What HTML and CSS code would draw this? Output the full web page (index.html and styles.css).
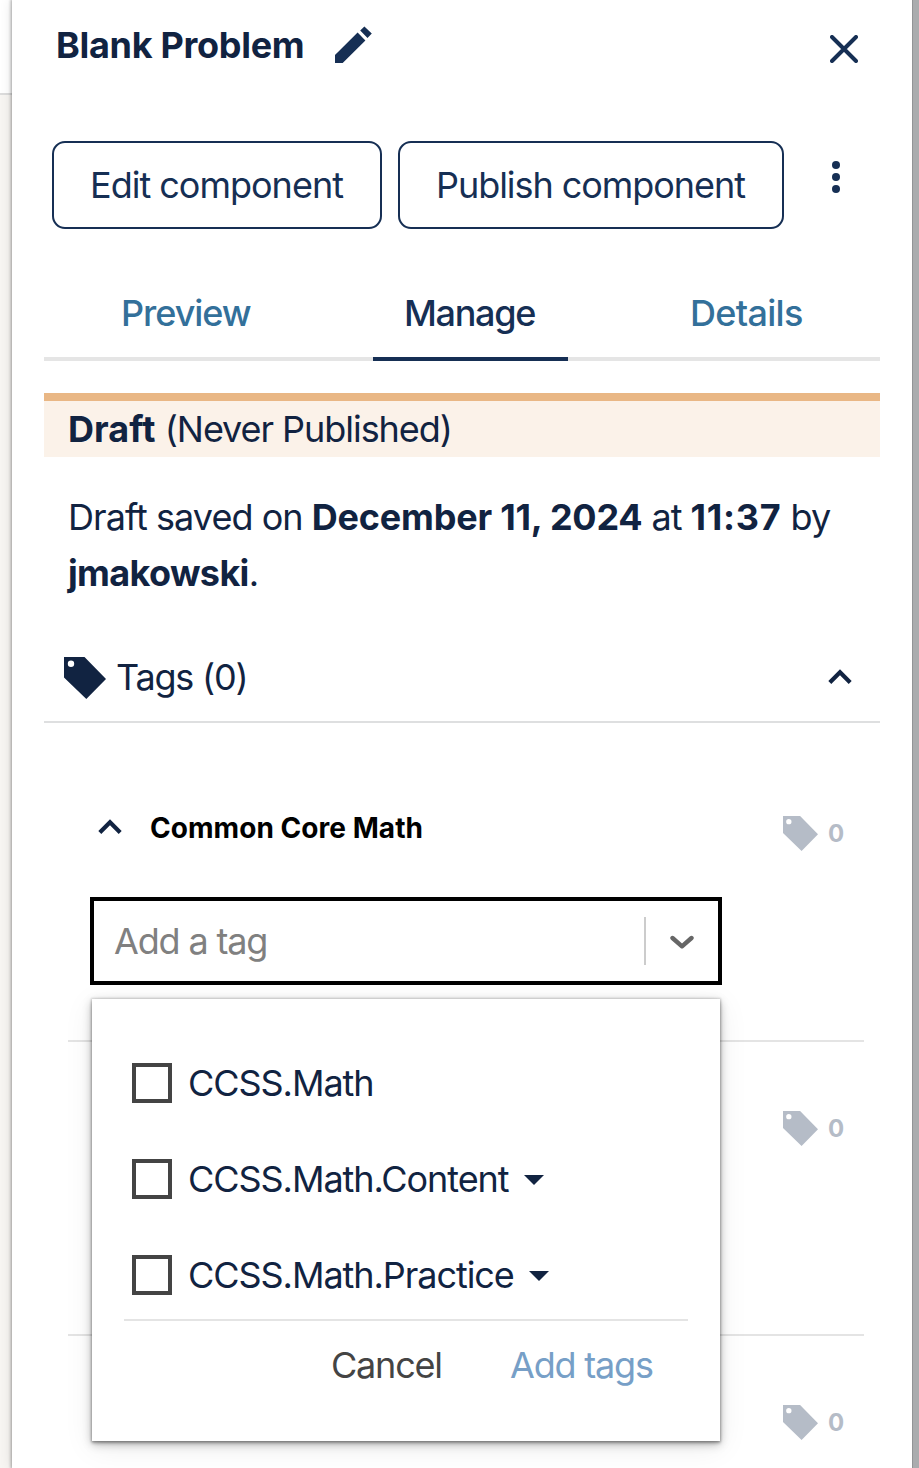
FILE: index.html
```html
<!DOCTYPE html>
<html lang="en">
<head>
<meta charset="utf-8">
<title>Blank Problem</title>
<link rel="stylesheet" href="styles.css">
</head>
<body>
<svg class="defs" width="0" height="0" aria-hidden="true">
  <symbol id="tag" viewBox="0 0 42 42"><path fill-rule="evenodd" d="M0 0H20.500L42 22 22.300 42 0 20.500ZM7 3.600a3.200 3.200 0 1 0 0 6.400a3.200 3.200 0 1 0 0-6.400Z"/></symbol>
  <symbol id="up" viewBox="0 0 24 16"><path d="M1.800 13.400 12 3.200l10.200 10.200" fill="none" stroke="currentColor" stroke-width="4.200"/></symbol>
</svg>
<div class="page">
  <div class="backdrop"><div class="backdrop-bar"></div></div>
  <main class="panel">
    <header class="header">
      <h1 class="title">Blank Problem</h1>
      <svg class="pencil" viewBox="0 0 38 38"><path d="M1 29 23.600 6.600l7.800 7.800L8.700 37H1ZM26.200 4.600 30.400.400l7.400 7.200L33.500 12Z"/></svg>
      <svg class="close" viewBox="0 0 28 28"><path d="M2 2 26 26M26 2 2 26"/></svg>
    </header>
    <div class="actions">
      <button class="button edit">Edit component</button>
      <button class="button publish">Publish component</button>
      <svg class="kebab" viewBox="0 0 8 32"><circle cx="4" cy="4" r="4"/><circle cx="4" cy="16" r="4"/><circle cx="4" cy="28" r="4"/></svg>
    </div>
    <nav class="tabs">
      <a class="tab preview">Preview</a>
      <a class="tab manage">Manage</a>
      <a class="tab details">Details</a>
    </nav>
    <div class="status"><b class="draft">Draft</b> <span class="never">(Never Published)</span></div>
    <p class="saved"><span class="saved-on">Draft saved on</span> <b class="date">December 11, 2024</b> <span class="at">at</span> <b class="time">11:37</b> <span class="by">by</span><br><b class="user">jmakowski</b>.</p>
    <div class="tags-head">
      <svg class="tags-icon"><use href="#tag"/></svg>
      <span class="tags-label">Tags (0)</span>
      <svg class="chevron tags-chevron"><use href="#up"/></svg>
    </div>
    <section class="taxonomy first">
      <div class="taxonomy-head">
        <svg class="chevron"><use href="#up"/></svg>
        <h2 class="taxonomy-name">Common Core Math</h2>
        <div class="count"><svg class="count-icon"><use href="#tag"/></svg><span>0</span></div>
      </div>
      <div class="select">
        <span class="placeholder">Add a tag</span>
        <i class="divider"></i>
        <svg class="arrow" viewBox="0 0 24 16"><path d="M2.500 4 12 12.300l9.500-8.300"/></svg>
        <div class="menu">
          <label class="option"><i class="box"></i><span>CCSS.Math</span></label>
          <label class="option"><i class="box"></i><span>CCSS.Math.Content</span><i class="caret"></i></label>
          <label class="option"><i class="box"></i><span>CCSS.Math.Practice</span><i class="caret"></i></label>
          <div class="menu-actions"><span class="cancel">Cancel</span><span class="add">Add tags</span></div>
        </div>
      </div>
    </section>
    <section class="taxonomy second">
      <div class="count"><svg class="count-icon"><use href="#tag"/></svg><span>0</span></div>
    </section>
    <section class="taxonomy third">
      <div class="count"><svg class="count-icon"><use href="#tag"/></svg><span>0</span></div>
    </section>
  </main>
  <div class="edge"></div>
</div>
</body>
</html>
```
FILE: styles.css
```css
* { box-sizing: border-box; }
body { margin: 0; font-family: Inter, "Liberation Sans", sans-serif; font-size: 36px; letter-spacing: -1.05px; color: #112341; }
svg { display: block; flex: none; fill: currentColor; }
.defs { position: absolute; }
.page { display: flex; width: 919px; height: 1468px; overflow: hidden; }
.backdrop { flex: none; width: 12px; background: #f7f5f2; }
.backdrop-bar { height: 95px; background: #fff; border-bottom: 2px solid #dcdcdc; }
.panel { position: relative; flex: none; width: 900px; padding: 0 32px; background: #fff; box-shadow: 0 0 3px 1px rgba(0,0,0,.32), 0 0 12px rgba(0,0,0,.12); overflow: hidden; }
.edge { position: relative; width: 7px; background: #aaacae; border-left: 1px solid #929496; }

.header { display: flex; height: 141px; padding: 25px 22px 0 12px; }
.title { margin: 0; width: 278px; font-size: 36px; line-height: 40px; font-weight: 700; letter-spacing: -.3px; white-space: nowrap; }
.pencil { width: 38px; height: 38px; margin-top: 1px; color: #162f54; }
.close { width: 28px; height: 28px; margin: 10px 0 0 auto; stroke: #162f54; stroke-width: 4; stroke-linecap: round; }

.actions { display: flex; gap: 16px; padding-left: 8px; height: 88px; color: #162f54; }
.button { height: 88px; border: 2px solid #162f54; border-radius: 13px; background: #fff; padding: 0 0 0 36px; color: #162f54; font: 400 36px/84px Inter, sans-serif; letter-spacing: -1px; text-align: left; white-space: nowrap; }
.edit { width: 330px; }
.publish { width: 386px; letter-spacing: -1.05px; }
.kebab { width: 8px; height: 32px; margin: 20px 0 0 32px; }

.tabs { display: flex; height: 132px; padding-top: 42px; border-bottom: 4px solid #e5e5e5; line-height: 84px; font-weight: 500; color: #33709a; }
.tab { height: 90px; white-space: nowrap; }
.preview { width: 329px; padding-left: 77px; }
.manage { width: 195px; padding-left: 31px; letter-spacing: -1.3px; color: #162f54; border-bottom: 4px solid #162f54; }
.details { padding-left: 122px; letter-spacing: -.7px; }

.status { height: 64px; margin-top: 32px; padding-left: 24px; background: #fbf2e9; border-top: 8px solid #e9b785; line-height: 57px; white-space: nowrap; }
.never { letter-spacing: -1.05px; }
.draft { letter-spacing: .1px; }
.saved { margin: 32px 0 1px; padding-left: 24px; line-height: 56px; white-space: nowrap; }
.saved-on { letter-spacing: -.95px; }
.date { letter-spacing: -.2px; }
.time { letter-spacing: .7px; }
.by { letter-spacing: -.7px; }
.user { letter-spacing: -.65px; }
.tags-head { display: flex; height: 121px; padding: 54px 28px 0 20px; border-bottom: 2px solid #dedfe0; }
.tags-icon { width: 42px; height: 42px; margin-top: 1px; }
.tags-label { margin-left: 10px; line-height: 43px; letter-spacing: -1.2px; }
.chevron { width: 24px; height: 16px; }
.tags-chevron { margin: 13px 0 0 auto; }

.taxonomy { margin: 0 16px 0 24px; border-bottom: 2px solid #e4e4e4; }
.first { height: 319px; padding: 92px 0 0 22px; }
.second { height: 294px; padding-top: 68px; }
.third { height: 294px; padding-top: 68px; }
.taxonomy-head { display: flex; height: 82px; padding: 0 0 0 8px; }
.taxonomy-head .chevron { margin-top: 4px; }
.taxonomy-name { margin: 0 0 0 28px; font-size: 28px; line-height: 26px; font-weight: 700; letter-spacing: .05px; color: #000; white-space: nowrap; }
.count { display: flex; width: 81px; height: 38px; margin-left: auto; gap: 10px; color: #b5bcc7; font-size: 24px; line-height: 37px; font-weight: 700; letter-spacing: 0; }
.count-icon { width: 35px; height: 35px; margin-top: 1px; }

.select { position: relative; display: flex; width: 632px; height: 88px; padding-left: 20px; border: 4px solid #000; background: #fff; }
.placeholder { width: 530px; line-height: 80px; letter-spacing: -1.15px; color: #808080; }
.divider { width: 2px; height: 48px; margin-top: 16px; background: #ccc; }
.arrow { width: 24px; height: 16px; margin: 33px 0 0 24px; fill: none; stroke: #666; stroke-width: 4.400; stroke-linecap: round; stroke-linejoin: round; }
.menu { position: absolute; left: -2px; top: 98px; width: 628px; height: 442px; padding: 36px 32px 0; background: #fff; box-shadow: 0 2px 3px rgba(0,0,0,.3), 0 3px 9px rgba(0,0,0,.28), 0 0 2px 1px rgba(0,0,0,.14), 0 6px 28px rgba(0,0,0,.08); }
.option { display: flex; align-items: center; height: 96px; padding-left: 8px; white-space: nowrap; }
.box { width: 40px; height: 40px; margin-right: 16px; border: 4px solid #444; }
.caret { margin: 1px 0 0 15px; border: 10px solid transparent; border-top-color: #112341; border-bottom: 0; }
.menu-actions { display: flex; margin-top: -4px; border-top: 2px solid #e4e4e4; line-height: 89px; letter-spacing: -1.2px; color: #444; }
.cancel { width: 179px; margin-left: 207px; }
.add { color: #779fc7; }
```
